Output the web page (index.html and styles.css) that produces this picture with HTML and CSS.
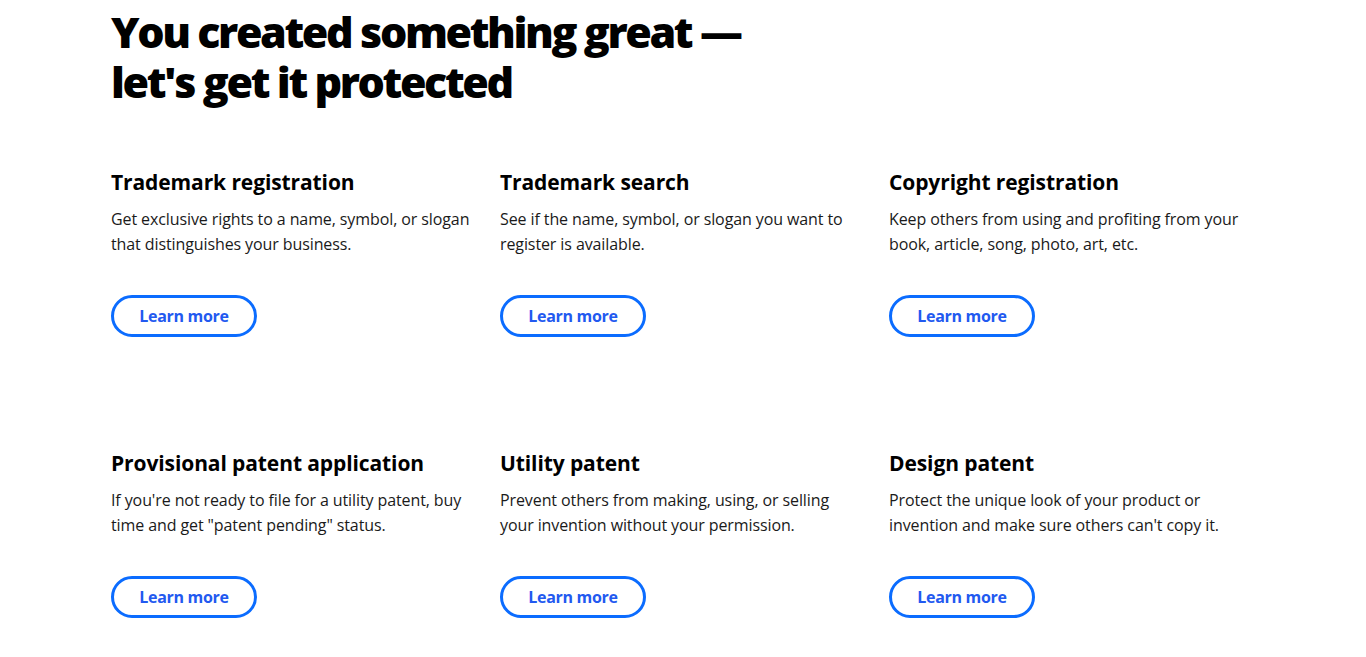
FILE: index.html
```html
<!DOCTYPE html>
<html lang="en">
<head>
  <meta charset="UTF-8">
  <title>Protect your work</title>
  <link rel="stylesheet" href="styles.css">
</head>
<body>
  <section class="protect">
    <h1>You created something great —<br>let's get it protected</h1>

    <div class="services">
      <div class="service">
        <h3>Trademark registration</h3>
        <p>Get exclusive rights to a name, symbol, or slogan that distinguishes your business.</p>
        <a class="btn" href="#">Learn more</a>
      </div>
      <div class="service">
        <h3>Trademark search</h3>
        <p>See if the name, symbol, or slogan you want to register is available.</p>
        <a class="btn" href="#">Learn more</a>
      </div>
      <div class="service">
        <h3>Copyright registration</h3>
        <p>Keep others from using and profiting from your book, article, song, photo, art, etc.</p>
        <a class="btn" href="#">Learn more</a>
      </div>
      <div class="service">
        <h3>Provisional patent application</h3>
        <p>If you're not ready to file for a utility patent, buy time and get "patent pending" status.</p>
        <a class="btn" href="#">Learn more</a>
      </div>
      <div class="service">
        <h3>Utility patent</h3>
        <p>Prevent others from making, using, or selling your invention without your permission.</p>
        <a class="btn" href="#">Learn more</a>
      </div>
      <div class="service">
        <h3>Design patent</h3>
        <p>Protect the unique look of your product or invention and make sure others can't copy it.</p>
        <a class="btn" href="#">Learn more</a>
      </div>
    </div>
  </section>
</body>
</html>
```

FILE: styles.css
```css
body {
  margin: 0;
  font-family: 'Open Sans', 'Noto Sans', sans-serif;
  background: #fff;
  color: #000;
}
.protect {
  padding: 7px 0 0 111px;
}
h1 {
  margin: 0;
  font-size: 43px;
  line-height: 50px;
  font-weight: 800;
  letter-spacing: -2.4px;
}
.services {
  display: grid;
  grid-template-columns: repeat(3, 389px);
  row-gap: 112px;
  margin-top: 61px;
}
.service {
  padding-right: 24px;
}
.service h3 {
  margin: 0;
  font-size: 21px;
  line-height: 28px;
  font-weight: 700;
  letter-spacing: -0.1px;
}
.service p {
  margin: 11px 0 38px;
  font-size: 16px;
  line-height: 25px;
  letter-spacing: -0.1px;
  color: #1a1a1a;
}
.btn {
  display: inline-flex;
  align-items: center;
  justify-content: center;
  box-sizing: border-box;
  width: 146px;
  height: 42px;
  border: 3px solid #0b6cff;
  border-radius: 21px;
  color: #2259f0;
  font-size: 16px;
  font-weight: 700;
  letter-spacing: -0.3px;
  text-decoration: none;
}
```
